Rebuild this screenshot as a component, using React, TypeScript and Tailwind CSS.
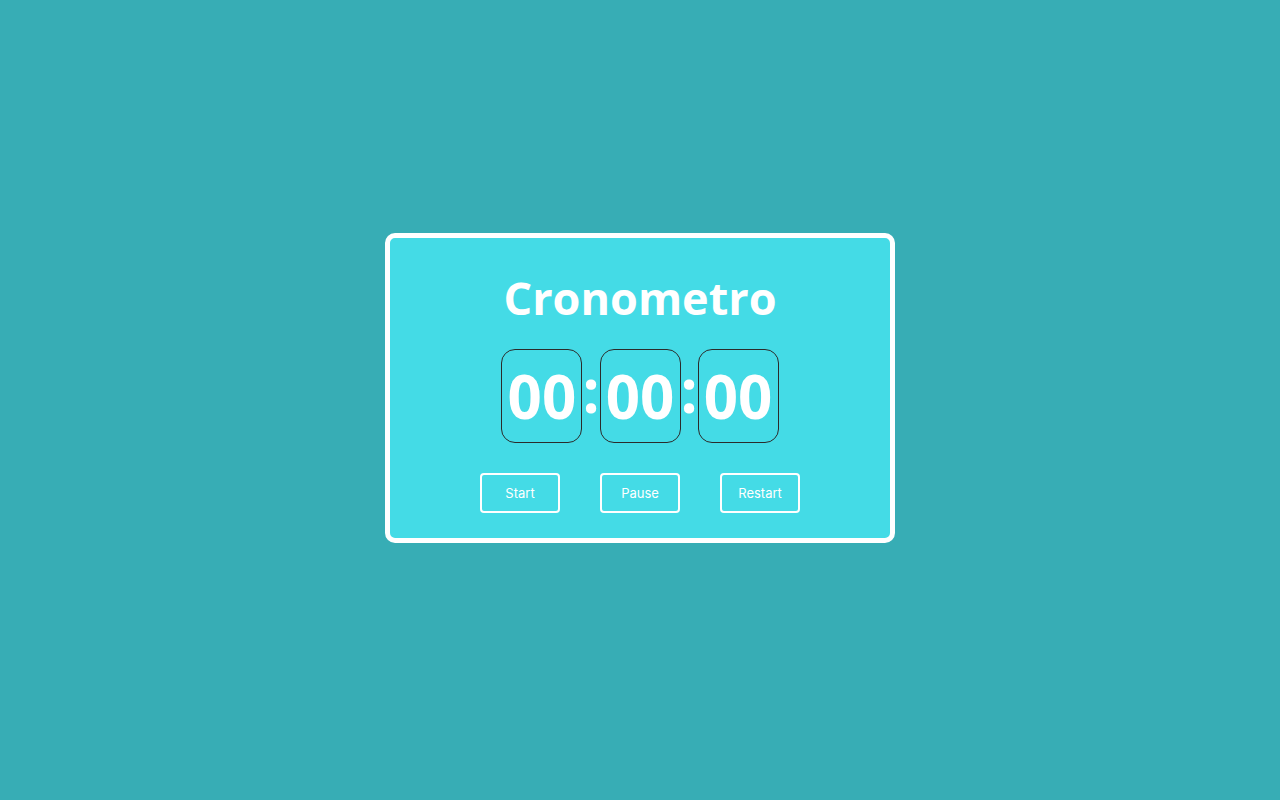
import React from "react";

function Box({ v }: { v: string }) {
  return (
    <div className="w-[81px] h-[94px] border border-[#2b2b2b] rounded-[14px] flex items-center justify-center">
      <span className="text-[60px] leading-none font-bold text-white">{v}</span>
    </div>
  );
}

function Colon() {
  return <span className="text-[60px] leading-none font-bold text-white mb-[12px]">:</span>;
}

export default function App() {
  return (
    <div
      className="min-h-screen w-full bg-[#37adb5] flex justify-center items-start pt-[233px]"
      style={{ fontFamily: '"Open Sans", sans-serif' }}
    >
      <div className="w-[510px] border-[5px] border-white rounded-[10px] bg-[#44dbe6] flex flex-col items-center pt-[36px] pb-[25px]">
        <h1 className="text-[45px] leading-[48px] font-bold text-white">Cronometro</h1>
        <div className="mt-[27px] flex items-center">
          <Box v="00" />
          <Colon />
          <Box v="00" />
          <Colon />
          <Box v="00" />
        </div>
        <div
          className="mt-[30px] flex gap-[40px]"
          style={{ fontFamily: 'Inter, sans-serif' }}
        >
          {["Start", "Pause", "Restart"].map((t) => (
            <button
              key={t}
              className="w-[80px] h-[40px] border-2 border-white rounded-[4px] text-[13px] pt-[2px] text-white flex items-center justify-center"
            >
              {t}
            </button>
          ))}
        </div>
      </div>
    </div>
  );
}
